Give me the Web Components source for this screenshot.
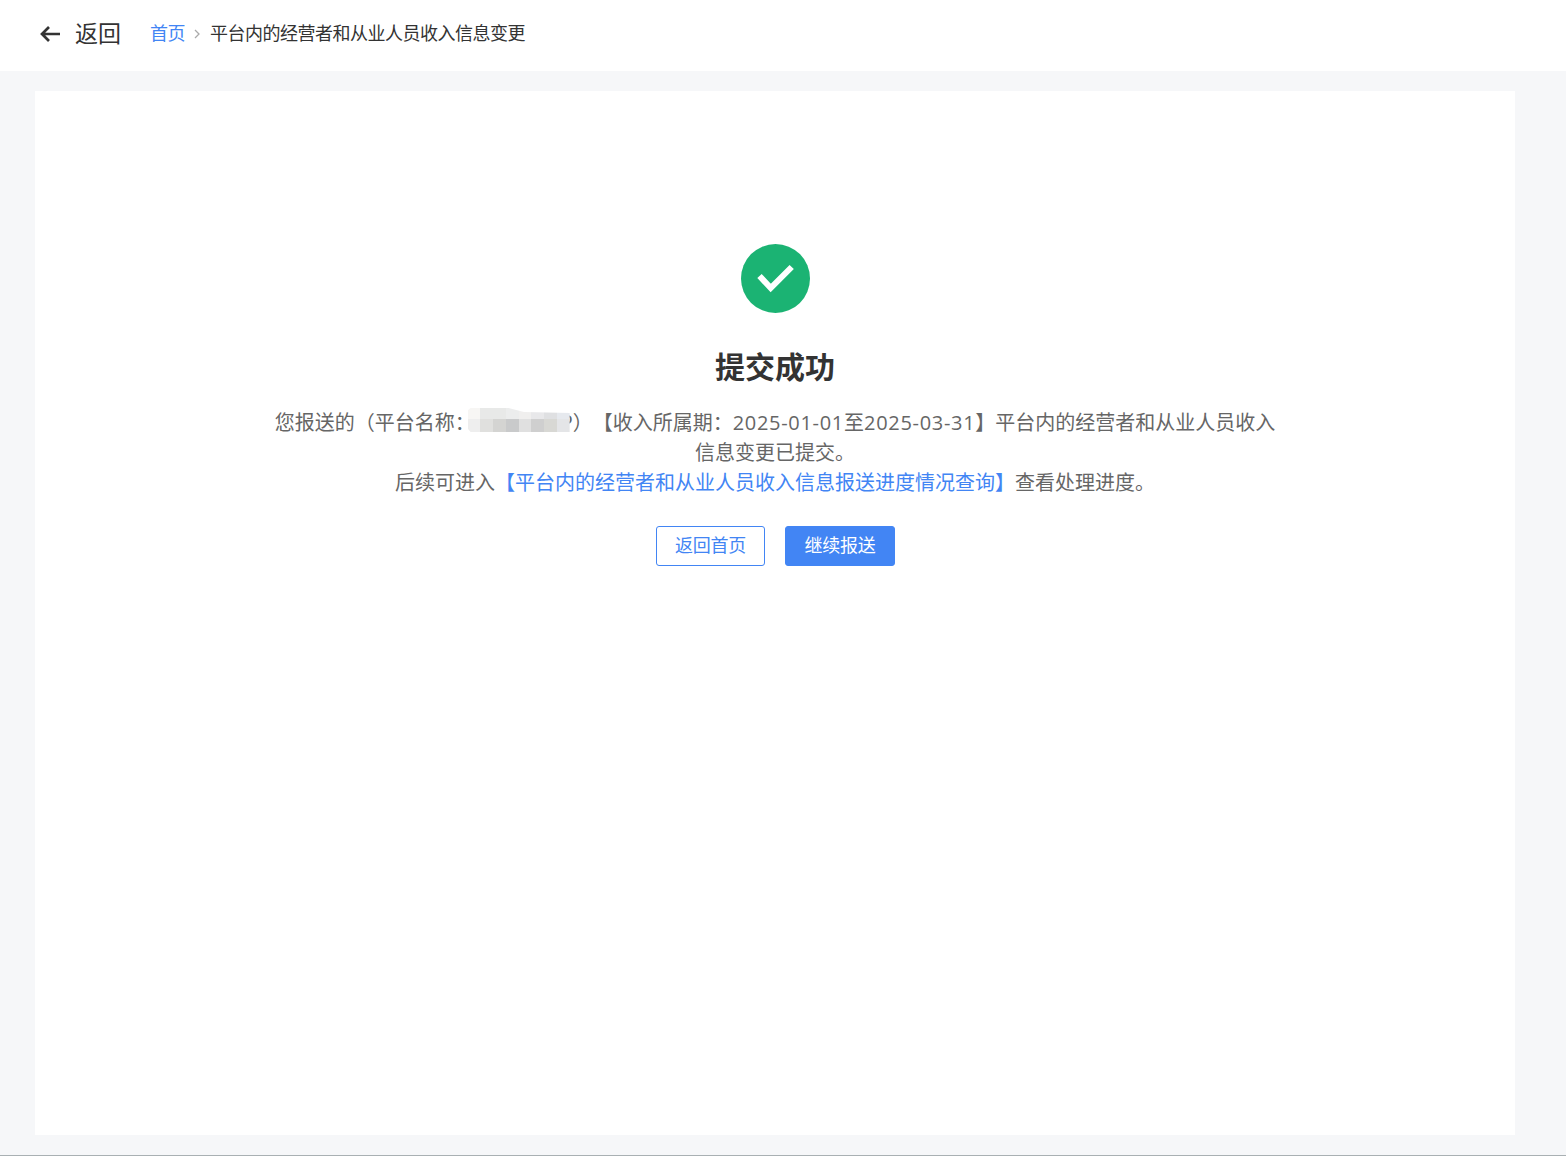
<!DOCTYPE html>
<html lang="zh-CN">
<head>
<meta charset="utf-8">
<title>提交成功</title>
<style>
  html, body { margin: 0; padding: 0; }
  body {
    height: 1156px;
    overflow: hidden;
    background: #f6f7f9;
    font-family: "Noto Sans CJK SC", "Liberation Sans", sans-serif;
    color: #333;
  }
</style>
</head>
<body>
<app-shell>
  <page-header slot="header" current="平台内的经营者和从业人员收入信息变更"></page-header>
  <success-card></success-card>
</app-shell>

<script>
class AppShell extends HTMLElement {
  constructor() {
    super();
    this.shadowDOM = this.attachShadow({ mode: 'open' });
  }

  connectedCallback() {
    this.shadowDOM.innerHTML = `
      <style>
        :host {
          display: flex;
          flex-direction: column;
          height: 1156px;
          box-sizing: border-box;
          border-bottom: 1px solid #a9b0b3;
        }
        main {
          flex: 1;
          display: flex;
          padding: 20px 51px 20px 35px;
          min-height: 0;
        }
      </style>
      <slot name="header"></slot>
      <main><slot></slot></main>
    `;
  }
}

class PageHeader extends HTMLElement {
  constructor() {
    super();
    this.shadowDOM = this.attachShadow({ mode: 'open' });
  }

  connectedCallback() {
    this.shadowDOM.innerHTML = `
      <style>
        :host {
          display: flex;
          align-items: center;
          height: 71px;
          padding: 0 0 3px 39px;
          box-sizing: border-box;
          background: #fff;
        }
        .back {
          display: flex;
          align-items: center;
          gap: 14px;
          font-size: 23px;
          color: #333;
          margin-right: 29px;
        }
        .back span { padding-bottom: 4px; }
        svg { display: block; }
        .crumbs {
          display: flex;
          align-items: center;
          font-size: 18px;
          letter-spacing: -0.5px;
          color: #333;
        }
        .crumbs a, .crumbs span { padding-bottom: 4px; }
        .crumbs a { color: #4285f4; text-decoration: none; }
        .sep { margin: 0 10px 0 9px; }
      </style>
      <div class="back">
        <svg width="22" height="18" viewBox="0 0 22 18" fill="none" stroke="#333" stroke-width="2.7">
          <path d="M21 9H3M10 2L3 9l7 7"/>
        </svg>
        <span>返回</span>
      </div>
      <nav class="crumbs">
        <a href="#">首页</a>
        <svg class="sep" width="6" height="10" viewBox="0 0 6 10" fill="none" stroke="#aaa" stroke-width="1.3">
          <path d="M1 1l4 4-4 4"/>
        </svg>
        <span>${this.getAttribute('current')}</span>
      </nav>
    `;
  }
}

// the platform name is pixelated out in the reference, only its last letter peeks out
class MosaicBlur extends HTMLElement {
  constructor() {
    super();
    this.shadowDOM = this.attachShadow({ mode: 'open' });
  }

  connectedCallback() {
    const top = ['#f7f6f4', '#e8e9e8', '#e8e9e8', '#eceded', '#f0efee', '#e8e8ea', '#dfe0e2', '#e6e9ee'];
    const bottom = ['#eeeeee', '#e0e0de', '#d4d4d2', '#c9cacb', '#e0e0e0', '#cfcfcf', '#d8d8d4', '#e4e5e7'];
    const cells = [...top, ...bottom].map((c) => `<i style="background:${c}"></i>`).join('');
    this.shadowDOM.innerHTML = `
      <style>
        :host {
          display: inline-block;
          position: relative;
          width: 98px;
          text-align: right;
        }
        .grid {
          position: absolute;
          left: -7px;
          top: 1px;
          width: 102px;
          height: 24px;
          display: grid;
          grid-template-columns: repeat(8, 1fr);
          grid-template-rows: 11px 13px;
          clip-path: polygon(3px 0, 40% 0, 55% 4px, 100% 5px, 100% 100%, 3px 100%, 0 85%, 0 10%);
          filter: blur(.4px);
        }
      </style>
      <slot></slot>
      <div class="grid">${cells}</div>
    `;
  }
}

class SuccessCard extends HTMLElement {
  constructor() {
    super();
    this.shadowDOM = this.attachShadow({ mode: 'open' });
  }

  connectedCallback() {
    this.shadowDOM.innerHTML = `
      <style>
        :host {
          display: flex;
          flex-direction: column;
          align-items: center;
          flex: 1;
          background: #fff;
          padding-top: 153px;
          box-sizing: border-box;
        }
        .icon { display: block; }
        h1 {
          margin: 28px 0 0;
          font-size: 30px;
          line-height: 48px;
          font-weight: 700;
          color: #333;
        }
        .desc {
          width: 1010px;
          margin-top: 18px;
          font-size: 20px;
          line-height: 30px;
          text-align: center;
          color: #666;
          text-spacing-trim: space-all;
        }
        .desc a { color: #4285f4; text-decoration: none; }
        .num {
          font-family: "Open Sans", "Liberation Sans", sans-serif;
          letter-spacing: 0.7px;
          line-height: 1;
        }
        .actions {
          display: flex;
          gap: 20px;
          margin-top: 29px;
        }
      </style>
      <svg class="icon" width="69" height="69" viewBox="0 0 69 69">
        <circle cx="34.5" cy="34.5" r="34.5" fill="#1bb373"/>
        <path d="M18.5 32L29.7 44 50.7 23" fill="none" stroke="#fff" stroke-width="6"/>
      </svg>
      <h1>提交成功</h1>
      <div class="desc">
        您报送的（平台名称：<mosaic-blur>P</mosaic-blur>）【收入所属期：<span class="num">2025-01-01</span>至<span class="num">2025-03-31</span>】平台内的经营者和从业人员收入<br>
        信息变更已提交。<br>
        后续可进入<a href="#">【平台内的经营者和从业人员收入信息报送进度情况查询】</a>查看处理进度。
      </div>
      <div class="actions">
        <action-button style="width:109px">返回首页</action-button>
        <action-button style="width:110px" primary>继续报送</action-button>
      </div>
    `;
  }
}

class ActionButton extends HTMLElement {
  constructor() {
    super();
    this.shadowDOM = this.attachShadow({ mode: 'open' });
  }

  connectedCallback() {
    this.shadowDOM.innerHTML = `
      <style>
        :host {
          display: inline-flex;
          align-items: center;
          justify-content: center;
          height: 40px;
          box-sizing: border-box;
          padding: 0 0 5px 1px;
          border: 1px solid #4285f4;
          border-radius: 3px;
          font-size: 18px;
          letter-spacing: -0.25px;
          color: #4285f4;
          background: #fff;
          cursor: pointer;
        }
        :host([primary]) {
          background: #4285f4;
          color: #fff;
        }
      </style>
      <slot></slot>
    `;
  }
}

customElements.define('app-shell', AppShell);
customElements.define('page-header', PageHeader);
customElements.define('mosaic-blur', MosaicBlur);
customElements.define('success-card', SuccessCard);
customElements.define('action-button', ActionButton);
</script>
</body>
</html>
